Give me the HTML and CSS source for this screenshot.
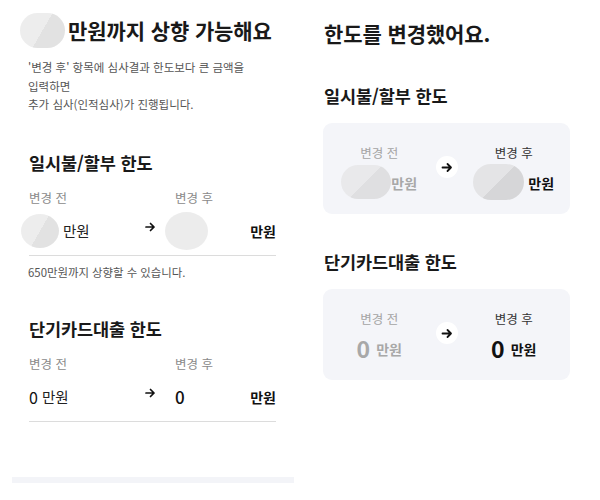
FILE: index.html
```html
<!DOCTYPE html>
<html lang="ko">
<head>
<meta charset="utf-8">
<link rel="stylesheet" href="styles.css">
</head>
<body>
<div class="screens">
  <section class="panel left">
    <h1 class="title"><span class="blob blob-title"></span>만원까지 상향 가능해요</h1>
    <p class="desc">'변경 후' 항목에 심사결과 한도보다 큰 금액을<br>입력하면<br>추가 심사(인적심사)가 진행됩니다.</p>

    <h2 class="head">일시불/할부 한도</h2>
    <div class="grid labels"><span>변경 전</span><span></span><span>변경 후</span></div>
    <div class="grid values">
      <div class="before"><span class="blob blob-b1"></span><span class="unit">만원</span></div>
      <div class="arrow"><svg width="11" height="10" viewBox="0 0 11 10"><path d="M1 5h8M5.5 1.5L9 5l-3.5 3.5" fill="none" stroke="#111" stroke-width="1.7" stroke-linecap="round" stroke-linejoin="round"/></svg></div>
      <div class="after"><span class="blob blob-a1"></span><span class="unit-strong">만원</span></div>
    </div>
    <p class="note">650만원까지 상향할 수 있습니다.</p>

    <h2 class="head head2">단기카드대출 한도</h2>
    <div class="grid labels"><span>변경 전</span><span></span><span>변경 후</span></div>
    <div class="grid values">
      <div class="before"><span class="num">0</span><span class="unit">만원</span></div>
      <div class="arrow"><svg width="11" height="10" viewBox="0 0 11 10"><path d="M1 5h8M5.5 1.5L9 5l-3.5 3.5" fill="none" stroke="#111" stroke-width="1.7" stroke-linecap="round" stroke-linejoin="round"/></svg></div>
      <div class="after"><span class="num-after">0</span><span class="unit-strong">만원</span></div>
    </div>
    <div class="bottom-bar"></div>
  </section>

  <section class="panel right">
    <h1 class="title-r">한도를 변경했어요.</h1>

    <h2 class="head head-r1">일시불/할부 한도</h2>
    <div class="card">
      <div class="col col-before">
        <span class="clabel">변경 전</span>
        <div class="cval"><span class="blob blob-c1"></span><span class="cunit">만원</span></div>
      </div>
      <div class="circle"><svg width="12" height="11" viewBox="0 0 12 11"><path d="M1.5 5.5h8.5M6.5 2l3.5 3.5L6.5 9" fill="none" stroke="#111" stroke-width="1.8" stroke-linecap="round" stroke-linejoin="round"/></svg></div>
      <div class="col col-after">
        <span class="clabel">변경 후</span>
        <div class="cval"><span class="blob blob-c2"></span><span class="cunit">만원</span></div>
      </div>
    </div>

    <h2 class="head head-r2">단기카드대출 한도</h2>
    <div class="card">
      <div class="col col-before">
        <span class="clabel">변경 전</span>
        <div class="cval"><span class="cnum">0</span><span class="cunit">만원</span></div>
      </div>
      <div class="circle"><svg width="12" height="11" viewBox="0 0 12 11"><path d="M1.5 5.5h8.5M6.5 2l3.5 3.5L6.5 9" fill="none" stroke="#111" stroke-width="1.8" stroke-linecap="round" stroke-linejoin="round"/></svg></div>
      <div class="col col-after">
        <span class="clabel">변경 후</span>
        <div class="cval"><span class="cnum">0</span><span class="cunit">만원</span></div>
      </div>
    </div>
  </section>
</div>
</body>
</html>
```

FILE: styles.css
```css
* { box-sizing: border-box; }
html, body { margin: 0; padding: 0; background: #fff; }
body {
  font-family: "Noto Sans CJK KR", "Noto Sans", sans-serif;
  color: #191919;
  width: 600px;
  height: 500px;
  overflow: hidden;
}
.screens { display: flex; }
.panel { width: 300px; height: 500px; }
.panel.left { padding: 0 24px 0 29px; }
.panel.right { padding: 0 30px 0 23px; }

h1, h2, p { margin: 0; font-weight: 700; }

.title {
  display: flex;
  align-items: center;
  margin: 12px 0 0 -9px;
  height: 36px;
  font-size: 21px;
  line-height: 36px;
  letter-spacing: -0.1px;
}

.blob {
  display: inline-block;
  border-radius: 50%;
  background: linear-gradient(120deg, #ededed 0 50%, #e2e2e2 50% 100%);
  flex: none;
}
.blob-title { width: 45px; height: 35px; margin-right: 3px; border-radius: 22px; }
.blob-b1 { width: 38px; height: 34px; margin-left: -8px; margin-right: 4px; }
.blob-a1 { width: 43px; height: 38px; margin-left: -10px; background: #ececec; }
.blob-c1 { width: 50px; height: 34px; border-radius: 17px; background: linear-gradient(135deg, #e9e9eb 0 50%, #dfdfe1 50% 100%); }
.blob-c2 { width: 51px; height: 36px; border-radius: 18px; margin-right: 4px; background: linear-gradient(135deg, #e4e4e6 0 50%, #d6d6d8 50% 100%); }

.desc {
  margin-top: 10px;
  font-size: 11.5px;
  font-weight: 400;
  line-height: 18.5px;
  color: #555;
  margin-left: -1px;
}

.head {
  font-size: 17.5px;
  line-height: 24px;
  margin-top: 37px;
  letter-spacing: -0.1px;
}
.head2 { margin-top: 37px; }

.grid {
  display: grid;
  grid-template-columns: 116px 30px 1fr;
  align-items: center;
}
.labels {
  margin-top: 15px;
  font-size: 12.5px;
  line-height: 16px;
  color: #8a8a8a;
}
.values {
  margin-top: 9px;
  height: 41px;
  padding-bottom: 8px;
  border-bottom: 1px solid #dcdcdc;
}
.values .before, .values .after { display: flex; align-items: center; height: 32px; }
.values .after { justify-content: space-between; }
.arrow { display: flex; align-items: center; height: 32px; padding-bottom: 8px; }
.unit { font-size: 14.5px; line-height: 20px; font-weight: 400; color: #222; }
.unit-strong { font-size: 14px; line-height: 20px; font-weight: 700; color: #111; margin-left: auto; }
.num { font-size: 16px; line-height: 20px; font-weight: 400; margin-right: 4px; color: #111; }
.num-after { font-size: 17px; line-height: 20px; font-weight: 500; color: #111; }

.note {
  margin-top: 8px;
  margin-left: -1px;
  font-size: 11.4px;
  line-height: 16px;
  font-weight: 400;
  color: #555;
}

.bottom-bar {
  margin: 55px 0 0 -17px;
  width: 282px;
  height: 6px;
  background: #f3f4f8;
}

.title-r {
  margin-top: 19px;
  margin-left: 1px;
  font-size: 21px;
  line-height: 28px;
  letter-spacing: -0.1px;
}
.head-r1 { margin-top: 37px; margin-left: 1px; }
.head-r2 { margin-top: 36px; margin-left: 1px; }

.card {
  margin-top: 15px;
  width: 247px;
  height: 91px;
  background: #f4f5f9;
  border-radius: 9px;
  display: grid;
  grid-template-columns: 1fr 22px 1fr;
  align-items: center;
}
.col {
  display: flex;
  flex-direction: column;
  align-items: center;
  padding-top: 3px;
}
.clabel { font-size: 12.5px; line-height: 16px; font-weight: 400; color: #a4a4a4; }
.col-after .clabel { color: #333; }
.cval { display: flex; align-items: center; height: 28px; margin-top: 7px; }
.cnum { font-size: 23px; line-height: 28px; font-weight: 700; margin-right: 6px; color: #a8a8a8; }
.cunit { font-size: 14px; line-height: 20px; font-weight: 700; color: #a8a8a8; padding-top: 3px; }
.col-after .cnum, .col-after .cunit { color: #111; }
.circle {
  width: 22px;
  height: 22px;
  border-radius: 50%;
  background: #fff;
  display: flex;
  align-items: center;
  justify-content: center;
  margin-top: -3px;
}
```
